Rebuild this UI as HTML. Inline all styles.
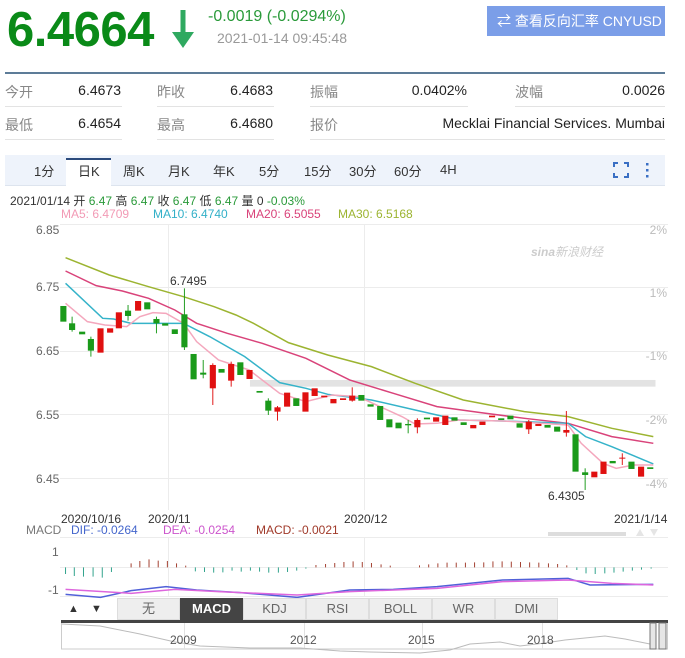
<!DOCTYPE html>
<html><head><meta charset="utf-8"><style>
*{margin:0;padding:0;box-sizing:border-box}
body{width:685px;height:658px;background:#fff;font-family:"Liberation Sans","Noto Sans CJK SC",sans-serif;position:relative;overflow:hidden;color:#333}
.a{position:absolute;white-space:nowrap}
.lb{color:#888;font-size:14px}
.v{color:#222;font-size:14px;text-align:right}
.ul{position:absolute;height:1px;background:#e3e3e3}
.tab{position:absolute;top:163px;font-size:13px;color:#333;line-height:18px;height:18px}
.bt{position:absolute;top:598px;height:22px;width:63px;border:1px solid #ddd;background:#eee;color:#666;font-size:13px;text-align:center;line-height:20px}
</style></head><body>
<div class="a" style="left:7px;top:0px;font-size:49px;font-weight:bold;color:#0a8a18;line-height:60px;letter-spacing:-0.5px">6.4664</div>
<svg class="a" style="left:168px;top:8px" width="30" height="42"><path d="M15 2V30" stroke="#2fa960" stroke-width="5"/><path d="M4 24L15 40L26 24Z" fill="#2fa960"/></svg>
<div class="a" style="left:208px;top:8px;font-size:16px;color:#2a9a3a">-0.0019 (-0.0294%)</div>
<div class="a" style="left:217px;top:30px;font-size:14px;color:#999">2021-01-14 09:45:48</div>
<div class="a" style="left:487px;top:6px;width:178px;height:30px;background:#7b9ee8;color:#fff;font-size:14px;line-height:30px;padding-left:10px">⇄ 查看反向汇率 CNYUSD</div>
<div class="a" style="left:5px;top:72px;width:660px;height:2px;background:#5d7c98"></div>
<div class="a lb" style="left:5px;top:82px">今开</div><div class="a v" style="left:60px;width:61px;top:82px">6.4673</div>
<div class="a lb" style="left:157px;top:82px">昨收</div><div class="a v" style="left:200px;width:73px;top:82px">6.4683</div>
<div class="a lb" style="left:310px;top:82px">振幅</div><div class="a v" style="left:380px;width:87px;top:82px">0.0402%</div>
<div class="a lb" style="left:515px;top:82px">波幅</div><div class="a v" style="left:580px;width:85px;top:82px">0.0026</div>
<div class="ul" style="left:5px;top:106px;width:117px"></div><div class="ul" style="left:157px;top:106px;width:117px"></div><div class="ul" style="left:310px;top:106px;width:158px"></div><div class="ul" style="left:515px;top:106px;width:150px"></div>
<div class="a lb" style="left:5px;top:115px">最低</div><div class="a v" style="left:60px;width:61px;top:115px">6.4654</div>
<div class="a lb" style="left:157px;top:115px">最高</div><div class="a v" style="left:200px;width:73px;top:115px">6.4680</div>
<div class="a lb" style="left:310px;top:115px">报价</div><div class="a v" style="left:380px;width:285px;top:115px">Mecklai Financial Services. Mumbai</div>
<div class="ul" style="left:5px;top:139px;width:117px"></div><div class="ul" style="left:157px;top:139px;width:117px"></div><div class="ul" style="left:310px;top:139px;width:355px"></div>
<div class="a" style="left:5px;top:155px;width:660px;height:31px;background:#eef3fb;border-bottom:1px solid #dde4ee"></div>
<div class="a" style="left:66px;top:158px;width:45px;height:29px;background:#fff;border-top:2px solid #2b4a7c"></div>
<div class="tab" style="left:34px">1分</div><div class="tab" style="left:78px">日K</div><div class="tab" style="left:123px">周K</div><div class="tab" style="left:168px">月K</div><div class="tab" style="left:213px">年K</div><div class="tab" style="left:259px">5分</div><div class="tab" style="left:304px">15分</div><div class="tab" style="left:349px">30分</div><div class="tab" style="left:394px">60分</div><div class="tab" style="left:440px;top:161px">4H</div>
<svg class="a" style="left:613px;top:162px" width="50" height="16"><path d="M1 5V1H5M11 1H15V5M15 11V15H11M5 15H1V11" stroke="#3a6fc4" stroke-width="2" fill="none"/><rect x="33" y="1" width="2.5" height="2.5" fill="#3a6fc4"/><rect x="33" y="7" width="2.5" height="2.5" fill="#3a6fc4"/><rect x="33" y="13" width="2.5" height="2.5" fill="#3a6fc4"/></svg>
<div class="a" style="left:10px;top:192px;font-size:12px;color:#333">2021/01/14 开 <span style="color:#2a9a3a">6.47</span> 高 <span style="color:#2a9a3a">6.47</span> 收 <span style="color:#2a9a3a">6.47</span> 低 <span style="color:#2a9a3a">6.47</span> 量 0 <span style="color:#2a9a3a">-0.03%</span></div>
<div class="a" style="left:61px;top:207px;font-size:12px;color:#f29ab5">MA5: 6.4709</div>
<div class="a" style="left:153px;top:207px;font-size:12px;color:#32b0c8">MA10: 6.4740</div>
<div class="a" style="left:246px;top:207px;font-size:12px;color:#d9437a">MA20: 6.5055</div>
<div class="a" style="left:338px;top:207px;font-size:12px;color:#9cb431">MA30: 6.5168</div>
<svg class="a" style="left:0;top:0" width="685" height="658">
<g stroke="#ececec" stroke-width="1">
<line x1="60" y1="224.5" x2="668" y2="224.5"/><line x1="60" y1="287.5" x2="668" y2="287.5"/><line x1="60" y1="351.5" x2="668" y2="351.5"/><line x1="60" y1="414.5" x2="668" y2="414.5"/><line x1="60" y1="478.5" x2="668" y2="478.5"/>
<line x1="168.5" y1="224" x2="168.5" y2="510"/><line x1="364.5" y1="224" x2="364.5" y2="510"/>
<line x1="60" y1="537.5" x2="668" y2="537.5"/><line x1="60" y1="567.5" x2="668" y2="567.5"/><line x1="60" y1="596.5" x2="668" y2="596.5"/>
<line x1="168.5" y1="537" x2="168.5" y2="597"/><line x1="364.5" y1="537" x2="364.5" y2="597"/>
</g>
<g font-size="12" fill="#666"><text x="36" y="234">6.85</text><text x="36" y="291">6.75</text><text x="36" y="355">6.65</text><text x="36" y="419">6.55</text><text x="36" y="483">6.45</text></g>
<g font-size="12" fill="#bbb" text-anchor="end"><text x="667" y="234">2%</text><text x="667" y="297">1%</text><text x="667" y="360">-1%</text><text x="667" y="424">-2%</text><text x="667" y="488">-4%</text></g>
<text x="531" y="256" font-size="12" fill="#ccc" font-style="italic"><tspan font-weight="bold">sina</tspan>新浪财经</text>
<g transform="translate(0,190) scale(0.437,0.3333)">
<rect x="572" y="570" width="928" height="20" fill="#e3e3e3"/>
<g fill="none" stroke-width="1.5" vector-effect="non-scaling-stroke">
<polyline vector-effect="non-scaling-stroke" stroke="#9cb431" points="150,203 250,255 340,290 420,320 490,350 540,375 580,400 660,458 750,495 850,530 950,580 1060,630 1200,665 1300,680 1400,715 1495,740"/>
<polyline vector-effect="non-scaling-stroke" stroke="#d9437a" points="150,243 220,287 280,303 340,325 400,360 450,400 520,430 600,460 700,505 800,570 900,610 1000,650 1100,668 1200,685 1300,700 1400,740 1495,760"/>
<polyline vector-effect="non-scaling-stroke" stroke="#35b3c9" points="150,280 235,385 260,387 300,400 420,400 480,440 560,500 640,578 700,595 750,613 850,630 950,660 1050,690 1150,693 1300,700 1340,740 1400,770 1495,822"/>
<polyline vector-effect="non-scaling-stroke" stroke="#f4a7bd" points="150,340 200,395 240,405 290,410 320,380 350,368 380,370 420,400 450,455 500,510 570,540 600,570 640,610 700,635 760,615 820,620 870,650 920,680 950,702 1000,700 1050,690 1150,693 1300,705 1330,760 1380,820 1410,835 1450,825 1495,825"/>
</g>
<g>
<line x1="422" y1="295" x2="422" y2="480" stroke="#1a9a1a" stroke-width="2.2"/>
<line x1="487" y1="520" x2="487" y2="645" stroke="#e01010" stroke-width="2.2"/>
<line x1="208" y1="440" x2="208" y2="500" stroke="#1a9a1a" stroke-width="2.2"/>
<line x1="165" y1="380" x2="165" y2="425" stroke="#1a9a1a" stroke-width="2.2"/>
<line x1="293" y1="345" x2="293" y2="392" stroke="#1a9a1a" stroke-width="2.2"/>
<line x1="358" y1="380" x2="358" y2="430" stroke="#1a9a1a" stroke-width="2.2"/>
<line x1="465" y1="510" x2="465" y2="565" stroke="#1a9a1a" stroke-width="2.2"/>
<line x1="635" y1="648" x2="635" y2="692" stroke="#e01010" stroke-width="2.2"/>
<line x1="806" y1="592" x2="806" y2="635" stroke="#e01010" stroke-width="2.2"/>
<line x1="1296" y1="663" x2="1296" y2="740" stroke="#e01010" stroke-width="2.2"/>
<line x1="1339" y1="835" x2="1339" y2="900" stroke="#1a9a1a" stroke-width="2.2"/>
<line x1="1424" y1="790" x2="1424" y2="825" stroke="#e01010" stroke-width="2.2"/>
<line x1="934" y1="690" x2="934" y2="730" stroke="#1a9a1a" stroke-width="2.2"/>
<line x1="955" y1="685" x2="955" y2="730" stroke="#e01010" stroke-width="2.2"/>
<line x1="529" y1="515" x2="529" y2="590" stroke="#e01010" stroke-width="2.2"/>
<line x1="614" y1="625" x2="614" y2="675" stroke="#1a9a1a" stroke-width="2.2"/>
<line x1="1210" y1="690" x2="1210" y2="732" stroke="#e01010" stroke-width="2.2"/>
<g fill="#1a9a1a">
<rect x="138" y="348" width="14" height="47"/><rect x="158" y="400" width="14" height="20"/><rect x="181" y="425" width="14" height="8"/><rect x="201" y="447" width="14" height="35"/><rect x="286" y="362" width="14" height="16"/><rect x="330" y="337" width="14" height="21"/><rect x="351" y="387" width="14" height="13"/><rect x="371" y="400" width="14" height="7"/><rect x="393" y="418" width="14" height="14"/><rect x="415" y="373" width="14" height="99"/><rect x="436" y="492" width="14" height="76"/><rect x="458" y="548" width="14" height="6"/><rect x="500" y="537" width="14" height="11"/><rect x="543" y="517" width="14" height="38"/><rect x="587" y="603" width="14" height="5"/><rect x="607" y="632" width="14" height="30"/><rect x="671" y="625" width="14" height="23"/><rect x="820" y="615" width="14" height="17"/><rect x="841" y="643" width="14" height="7"/><rect x="863" y="648" width="14" height="42"/><rect x="884" y="688" width="14" height="24"/><rect x="905" y="698" width="14" height="17"/><rect x="927" y="702" width="14" height="4"/><rect x="970" y="683" width="14" height="5"/><rect x="1033" y="682" width="14" height="10"/><rect x="1054" y="697" width="14" height="8"/><rect x="1140" y="685" width="14" height="5"/><rect x="1161" y="677" width="14" height="11"/><rect x="1182" y="700" width="14" height="13"/><rect x="1246" y="705" width="14" height="8"/><rect x="1268" y="710" width="14" height="15"/><rect x="1310" y="733" width="14" height="112"/><rect x="1332" y="847" width="14" height="8"/><rect x="1395" y="813" width="14" height="7"/><rect x="1438" y="815" width="14" height="22"/><rect x="1481" y="832" width="14" height="5"/>
</g>
<g fill="#e01010">
<rect x="223" y="415" width="14" height="73"/><rect x="245" y="415" width="14" height="13"/><rect x="265" y="367" width="14" height="48"/><rect x="309" y="333" width="14" height="29"/><rect x="480" y="525" width="14" height="70"/><rect x="522" y="522" width="14" height="50"/><rect x="564" y="540" width="14" height="27"/><rect x="628" y="652" width="14" height="13"/><rect x="650" y="608" width="14" height="42"/><rect x="692" y="607" width="14" height="58"/><rect x="713" y="595" width="14" height="23"/><rect x="735" y="617" width="14" height="5"/><rect x="756" y="627" width="14" height="13"/><rect x="778" y="625" width="14" height="5"/><rect x="799" y="617" width="14" height="15"/><rect x="948" y="690" width="14" height="22"/><rect x="991" y="682" width="14" height="13"/><rect x="1012" y="677" width="14" height="28"/><rect x="1076" y="705" width="14" height="10"/><rect x="1097" y="695" width="14" height="10"/><rect x="1119" y="677" width="14" height="5"/><rect x="1203" y="695" width="14" height="23"/><rect x="1225" y="702" width="14" height="6"/><rect x="1289" y="720" width="14" height="8"/><rect x="1353" y="845" width="14" height="17"/><rect x="1374" y="815" width="14" height="37"/><rect x="1417" y="803" width="14" height="3"/><rect x="1460" y="830" width="14" height="30"/>
</g>
</g>
</g>
<text x="170" y="285" font-size="12" fill="#333">6.7495</text>
<text x="548" y="500" font-size="12" fill="#333">6.4305</text>
<g font-size="12" fill="#333"><text x="61" y="523">2020/10/16</text><text x="148" y="523">2020/11</text><text x="344" y="523">2020/12</text><text x="614" y="523">2021/1/14</text></g>
<g font-size="12"><text x="26" y="534" fill="#777">MACD</text><text x="71" y="534" fill="#4466cc">DIF: -0.0264</text><text x="163" y="534" fill="#cc55cc">DEA: -0.0254</text><text x="256" y="534" fill="#a03a2a">MACD: -0.0021</text></g>
<text x="52" y="556" font-size="12" fill="#666">1</text><text x="48" y="594" font-size="12" fill="#666">-1</text>
<g transform="translate(0,500) scale(0.437,0.3333)">
<g stroke="#a03a2a" stroke-width="2.2"><path d="M300 202V190M320 202V183M341 202V178M362 202V182M383 202V183M404 202V190M425 202V197M723 202V195M745 202V192M766 202V189M787 202V186M808 202V184M829 202V186M850 202V189M872 202V193M893 202V197M960 202V196M981 202V193M1002 202V190M1023 202V188M1044 202V188M1065 202V188M1086 202V187M1107 202V187M1128 202V184M1149 202V184M1170 202V185M1191 202V186M1212 202V187M1233 202V188M1255 202V190M1276 202V192M1297 202V196"/></g>
<g stroke="#2aa088" stroke-width="2.2"><path d="M150 202V222M170 202V228M191 202V230M213 202V230M234 202V233M255 202V216M447 202V214M468 202V216M489 202V218M510 202V217M531 202V212M552 202V215M573 202V212M594 202V215M615 202V218M637 202V218M658 202V216M679 202V212M700 202V206M1320 202V210M1341 202V220M1362 202V222M1384 202V220M1405 202V218M1426 202V215M1447 202V212M1468 202V209M1490 202V206"/></g>
<polyline fill="none" stroke="#5060d8" stroke-width="1.5" vector-effect="non-scaling-stroke" points="150,283 230,292 300,272 380,260 450,270 550,278 680,292 800,270 900,268 1000,260 1150,240 1300,235 1350,255 1495,253"/>
<polyline fill="none" stroke="#dd66dd" stroke-width="1.5" vector-effect="non-scaling-stroke" points="150,268 300,280 400,268 500,275 680,285 800,275 1000,265 1150,245 1300,240 1400,250 1495,255"/>
</g>
<g fill="#ddd"><rect x="548" y="532" width="78" height="4"/></g>
<path d="M636 536L640 529L644 536Z M650 529L658 529L654 536Z" fill="#e5e5e5"/>
</svg>
<div class="a" style="left:62px;top:598px;width:23px;height:22px;font-size:11px;text-align:center;line-height:22px">▲</div>
<div class="a" style="left:85px;top:598px;width:23px;height:22px;font-size:11px;text-align:center;line-height:22px">▼</div>
<div class="bt" style="left:117px">无</div>
<div class="bt" style="left:180px;background:#444;color:#fff;border-color:#444;font-weight:bold">MACD</div>
<div class="bt" style="left:243px">KDJ</div><div class="bt" style="left:306px">RSI</div><div class="bt" style="left:369px">BOLL</div><div class="bt" style="left:432px">WR</div><div class="bt" style="left:495px">DMI</div>
<svg class="a" style="left:0;top:620px" width="685" height="38">
<rect x="61.5" y="2" width="606" height="27" fill="#fff" stroke="#ccc"/>
<rect x="61" y="0" width="607" height="3" fill="#444"/>
<g stroke="#e2e2e2"><line x1="184.5" y1="3" x2="184.5" y2="29"/><line x1="304.5" y1="3" x2="304.5" y2="29"/><line x1="422.5" y1="3" x2="422.5" y2="29"/><line x1="542.5" y1="3" x2="542.5" y2="29"/></g>
<polyline fill="none" stroke="#bbb" points="62,4 100,6 140,14 175,22 200,26 250,28 300,28 340,31 370,32 420,33 450,30 470,24 500,22 520,26 545,23 565,20 585,18 605,16 625,19 640,22 650,24"/>
<g font-size="12" fill="#555"><text x="170" y="24">2009</text><text x="290" y="24">2012</text><text x="408" y="24">2015</text><text x="527" y="24">2018</text></g>
<rect x="650" y="3" width="6" height="26" fill="#e6e6e6" stroke="#777"/><rect x="659" y="3" width="7" height="26" fill="#e6e6e6" stroke="#777"/>
</svg>
</body></html>
